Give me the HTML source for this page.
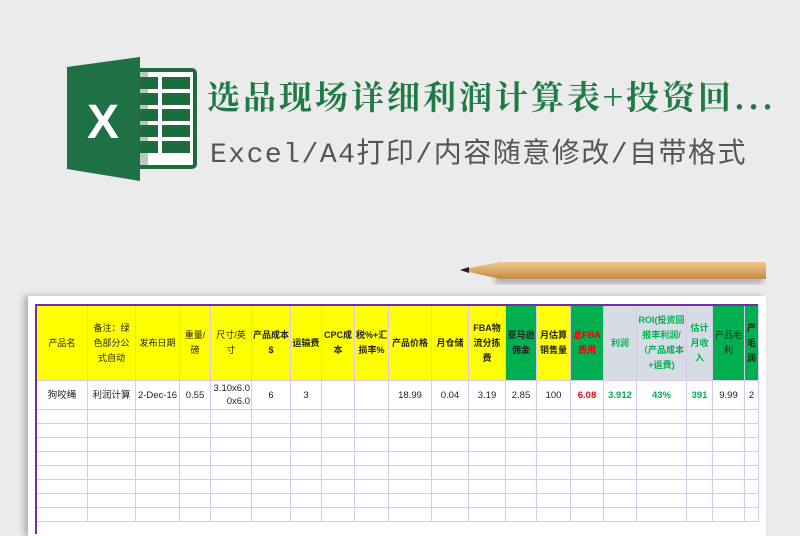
<!DOCTYPE html>
<html><head><meta charset="utf-8"><style>
*{margin:0;padding:0;box-sizing:border-box}
body{width:800px;height:526px;overflow:hidden;background:#ebebeb;position:relative;font-family:"Liberation Sans","Noto Sans CJK SC",sans-serif}
.title{position:absolute;left:207px;top:72px;font-size:33px;font-weight:bold;color:#1f7a45;letter-spacing:3px;white-space:nowrap;font-family:"Noto Serif CJK SC","Liberation Serif",serif}
.sub{position:absolute;left:210px;top:131px;font-size:28px;color:#555;white-space:nowrap;letter-spacing:1.5px;font-family:"Liberation Mono","Noto Sans CJK SC",sans-serif}
.sheet{position:absolute;left:28px;top:296px;width:738px;height:240px;background:#fff;box-shadow:-4px 0 6px rgba(0,0,0,.25)}
table{position:absolute;left:36px;top:305px;width:722px;border-collapse:collapse;table-layout:fixed;font-size:9px;color:#222}
td{border:1px solid #dcc8ec;text-align:center;vertical-align:middle;line-height:15px;overflow:hidden;white-space:normal;padding:0 1px}
tr.h td{height:75px;background:#ffff00;font-weight:bold}
tr.h td.g{background:#00b050}
tr.h td.s{background:#d6dce4;color:#00b050}
tr.d td{height:29px;white-space:nowrap;font-size:9.5px}
tr.e td{height:14px}
.top{position:absolute;left:36px;top:304px;width:722px;height:2px;background:#7030a0}
.lft{position:absolute;left:35px;top:304px;width:2px;height:230px;background:#7030a0}
</style></head><body>
<svg style="position:absolute;left:60px;top:55px" width="140" height="128" viewBox="0 0 140 128">
<rect x="70" y="15" width="65" height="97" rx="3" fill="#fff" stroke="#1d6b3e" stroke-width="4"/>
<rect x="70" y="17" width="18" height="93" fill="#b9c9be"/>
<g fill="#1d6b3e">
<rect x="78" y="22" width="20" height="12"/><rect x="102" y="22" width="28" height="12"/>
<rect x="78" y="38" width="20" height="12"/><rect x="102" y="38" width="28" height="12"/>
<rect x="78" y="54" width="20" height="12"/><rect x="102" y="54" width="28" height="12"/>
<rect x="78" y="70" width="20" height="12"/><rect x="102" y="70" width="28" height="12"/>
<rect x="78" y="86" width="20" height="12"/><rect x="102" y="86" width="28" height="12"/>
</g>
<polygon points="7,12 80,2 80,126 7,114" fill="#1e7145"/>
<text x="43" y="83" font-family="Liberation Sans" font-weight="bold" font-size="48" fill="#fff" text-anchor="middle">X</text>
</svg>
<div class="title">选品现场详细利润计算表+投资回...</div>
<div class="sub">Excel/A4打印/内容随意修改/自带格式</div>
<svg style="position:absolute;left:455px;top:256px" width="315" height="36">
<defs><linearGradient id="w" x1="0" y1="0" x2="0" y2="1"><stop offset="0" stop-color="#f0c890"/><stop offset=".5" stop-color="#dca868"/><stop offset="1" stop-color="#c08848"/></linearGradient>
<filter id="b"><feGaussianBlur stdDeviation="3"/></filter></defs>
<rect x="40" y="20" width="268" height="8" fill="rgba(0,0,0,.25)" filter="url(#b)"/>
<polygon points="45,6 311,6 311,23 45,23 5,14" fill="url(#w)"/>
<polygon points="5,14 14,11 14,17" fill="#222"/>
</svg>
<div class="sheet"></div>
<table>
<colgroup><col style="width:51px"><col style="width:48px"><col style="width:44px"><col style="width:31px"><col style="width:41px"><col style="width:39px"><col style="width:31px"><col style="width:33px"><col style="width:34px"><col style="width:43px"><col style="width:37px"><col style="width:37px"><col style="width:31px"><col style="width:34px"><col style="width:33px"><col style="width:33px"><col style="width:50px"><col style="width:26px"><col style="width:32px"><col style="width:14px"></colgroup>
<tr class="h"><td style="font-weight:normal">产品名</td><td style="font-weight:normal;padding:0 4px">备注：绿色部分公式自动</td><td style="font-weight:normal">发布日期</td><td style="font-weight:normal">重量/磅</td><td style="font-weight:normal">尺寸/英寸</td><td>产品成本$</td><td>运输费</td><td>CPC成本</td><td>税%+汇损率%</td><td>产品价格</td><td>月仓储</td><td>FBA物流分拣费</td><td class="g">亚马逊佣金</td><td>月估算销售量</td><td class="g" style="color:#e00">总FBA费用</td><td class="s">利润</td><td class="s">ROI(投资回报率利润/（产品成本+运费)</td><td class="s">估计月收入</td><td class="g" style="font-weight:normal">产品毛利</td><td class="g">产毛润</td></tr>
<tr class="d"><td>狗咬绳</td><td>利润计算</td><td>2-Dec-16</td><td>0.55</td><td style="white-space:normal;line-height:13px;text-align:right">3.10x6.0 0x6.0</td><td>6</td><td>3</td><td></td><td></td><td>18.99</td><td>0.04</td><td>3.19</td><td>2.85</td><td>100</td><td style="color:#e00;font-weight:bold">6.08</td><td style="color:#00b050;font-weight:bold">3.912</td><td style="color:#00b050;font-weight:bold">43%</td><td style="color:#00b050;font-weight:bold">391</td><td>9.99</td><td>2</td></tr>
<tr class="e"><td></td><td></td><td></td><td></td><td></td><td></td><td></td><td></td><td></td><td></td><td></td><td></td><td></td><td></td><td></td><td></td><td></td><td></td><td></td><td></td></tr>
<tr class="e"><td></td><td></td><td></td><td></td><td></td><td></td><td></td><td></td><td></td><td></td><td></td><td></td><td></td><td></td><td></td><td></td><td></td><td></td><td></td><td></td></tr>
<tr class="e"><td></td><td></td><td></td><td></td><td></td><td></td><td></td><td></td><td></td><td></td><td></td><td></td><td></td><td></td><td></td><td></td><td></td><td></td><td></td><td></td></tr>
<tr class="e"><td></td><td></td><td></td><td></td><td></td><td></td><td></td><td></td><td></td><td></td><td></td><td></td><td></td><td></td><td></td><td></td><td></td><td></td><td></td><td></td></tr>
<tr class="e"><td></td><td></td><td></td><td></td><td></td><td></td><td></td><td></td><td></td><td></td><td></td><td></td><td></td><td></td><td></td><td></td><td></td><td></td><td></td><td></td></tr>
<tr class="e"><td></td><td></td><td></td><td></td><td></td><td></td><td></td><td></td><td></td><td></td><td></td><td></td><td></td><td></td><td></td><td></td><td></td><td></td><td></td><td></td></tr>
<tr class="e"><td></td><td></td><td></td><td></td><td></td><td></td><td></td><td></td><td></td><td></td><td></td><td></td><td></td><td></td><td></td><td></td><td></td><td></td><td></td><td></td></tr>
<tr class="e"><td></td><td></td><td></td><td></td><td></td><td></td><td></td><td></td><td></td><td></td><td></td><td></td><td></td><td></td><td></td><td></td><td></td><td></td><td></td><td></td></tr>
</table>
<div class="top"></div><div class="lft"></div>
</body></html>
